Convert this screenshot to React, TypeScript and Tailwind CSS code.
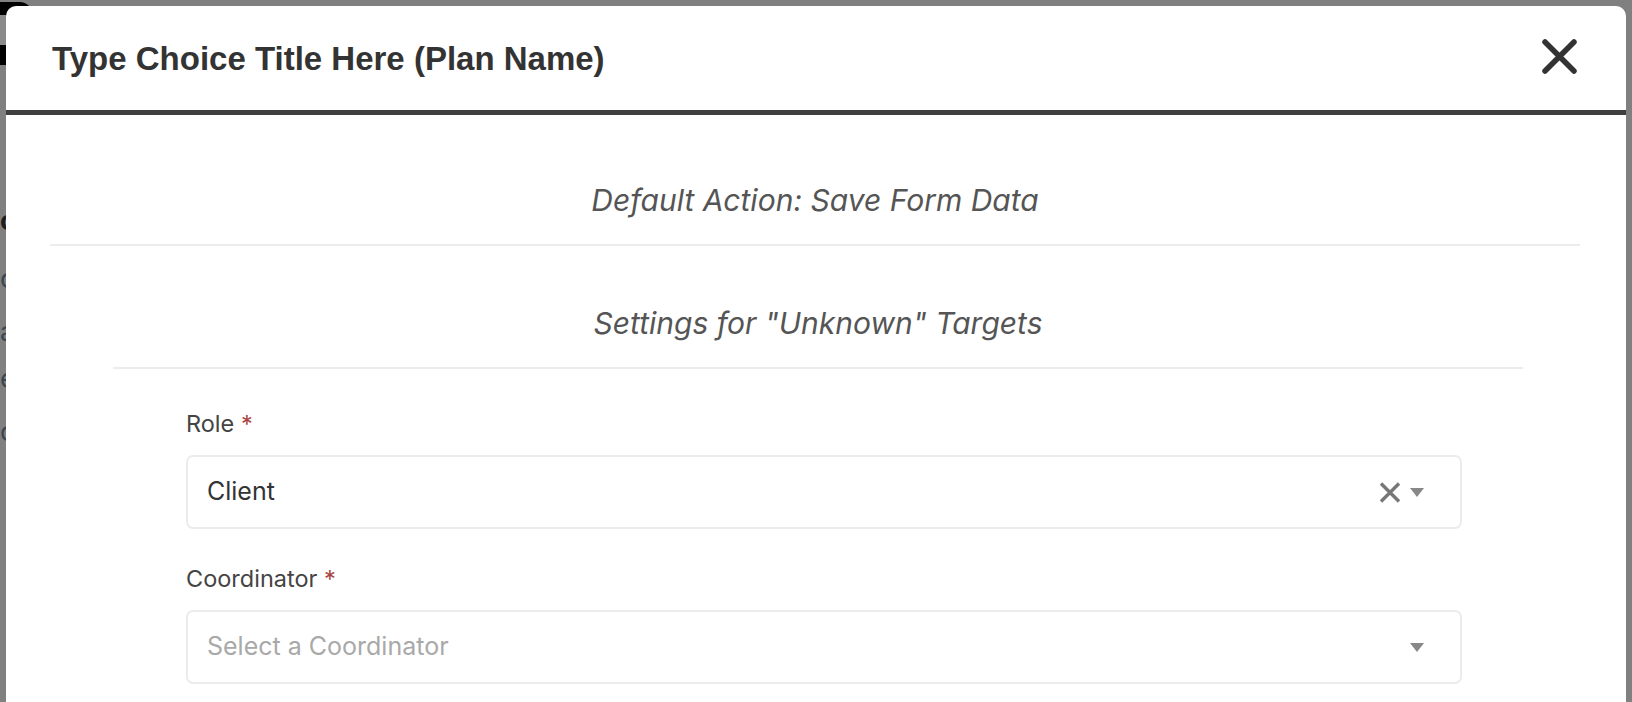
import React from "react";

function CloseIcon() {
    return (
        <svg width="35" height="35" viewBox="0 0 35 35" className="-mt-[3px]">
            <path d="M3 3 L32 32 M32 3 L3 32" stroke="#333" strokeWidth="5.5" strokeLinecap="round" />
        </svg>
    );
}

function ClearIcon() {
    return (
        <svg width="22" height="21" viewBox="0 0 22 21">
            <path d="M2 1.5 L20 19.5 M20 1.5 L2 19.5" stroke="#777" strokeWidth="3.4" />
        </svg>
    );
}

function Caret() {
    return (
        <svg width="14" height="9" viewBox="0 0 14 9">
            <path d="M0 0 H14 L7 9 Z" fill="#888" />
        </svg>
    );
}

function Field({ label, value, placeholder, clearable }: { label: string; value?: string; placeholder?: string; clearable?: boolean }) {
    return (
        <div>
            <label className="block text-[23.5px] leading-[28px] text-[#444]">
                {label} <span className="text-[#a94442]">*</span>
            </label>
            <div className="mt-[17px] h-[74px] border-2 border-[#ececec] rounded-[7px] flex items-center pl-[19px] pr-[36px]">
                {value ? (
                    <span className="text-[25px] text-[#333]">{value}</span>
                ) : (
                    <span className="text-[25px] text-[#a9a9a9]">{placeholder}</span>
                )}
                <div className="ml-auto flex items-center gap-[9px]">
                    {clearable && <ClearIcon />}
                    <Caret />
                </div>
            </div>
        </div>
    );
}

export default function App() {
    return (
        <div
            className="relative w-[1632px] h-[702px] overflow-hidden bg-[#808080]"
            style={{ fontFamily: "Inter, 'Noto Sans', sans-serif" }}
        >
            {/* dimmed page behind the modal */}
            <div className="absolute left-0 top-[2px] w-[32px] h-[63px] bg-black rounded-tr-[12px]">
                <div className="mt-[13px] w-[6px] h-[30px] bg-[#8a8a8a]" />
            </div>
            <div className="absolute left-0 top-[204px] flex flex-col text-[27px] leading-[34px] text-[#3a4753]">
                <span className="font-bold text-[#1e1e1e]">co</span>
                <span className="mt-[24px]">co</span>
                <span className="mt-[19px]">a</span>
                <span className="mt-[13px]">e</span>
                <span className="mt-[19px]">co</span>
            </div>

            <div className="absolute left-[6px] top-[6px] w-[1620px] h-[740px] bg-white rounded-[10px] overflow-hidden">
                <div className="h-[109px] flex items-center justify-between pl-[46px] pr-[49px] border-b-[5px] border-[#3f3f3f]">
                    <h2
                        className="text-[33px] font-bold leading-none text-[#333]"
                        style={{ fontFamily: "'Liberation Sans', Arial, sans-serif" }}
                    >
                        Type Choice Title Here (Plan Name)
                    </h2>
                    <CloseIcon />
                </div>

                <div className="pl-[44px] pr-[46px]">
                    <div className="pt-[68px] pb-[26px] border-b-2 border-[#ececec] text-center">
                        <h3 className="text-[30px] italic leading-[35px] text-[#555]">Default Action: Save Form Data</h3>
                    </div>

                    <div className="ml-[63px] mr-[57px] pt-[60px] pb-[26px] border-b-2 border-[#ececec] text-center">
                        <h3 className="text-[30px] italic leading-[35px] text-[#555]">Settings for "Unknown" Targets</h3>
                    </div>

                    <div className="ml-[136px] mr-[118px] pt-[41px] flex flex-col gap-[36px]">
                        <Field label="Role" value="Client" clearable />
                        <Field label="Coordinator" placeholder="Select a Coordinator" />
                    </div>
                </div>
            </div>
        </div>
    );
}
